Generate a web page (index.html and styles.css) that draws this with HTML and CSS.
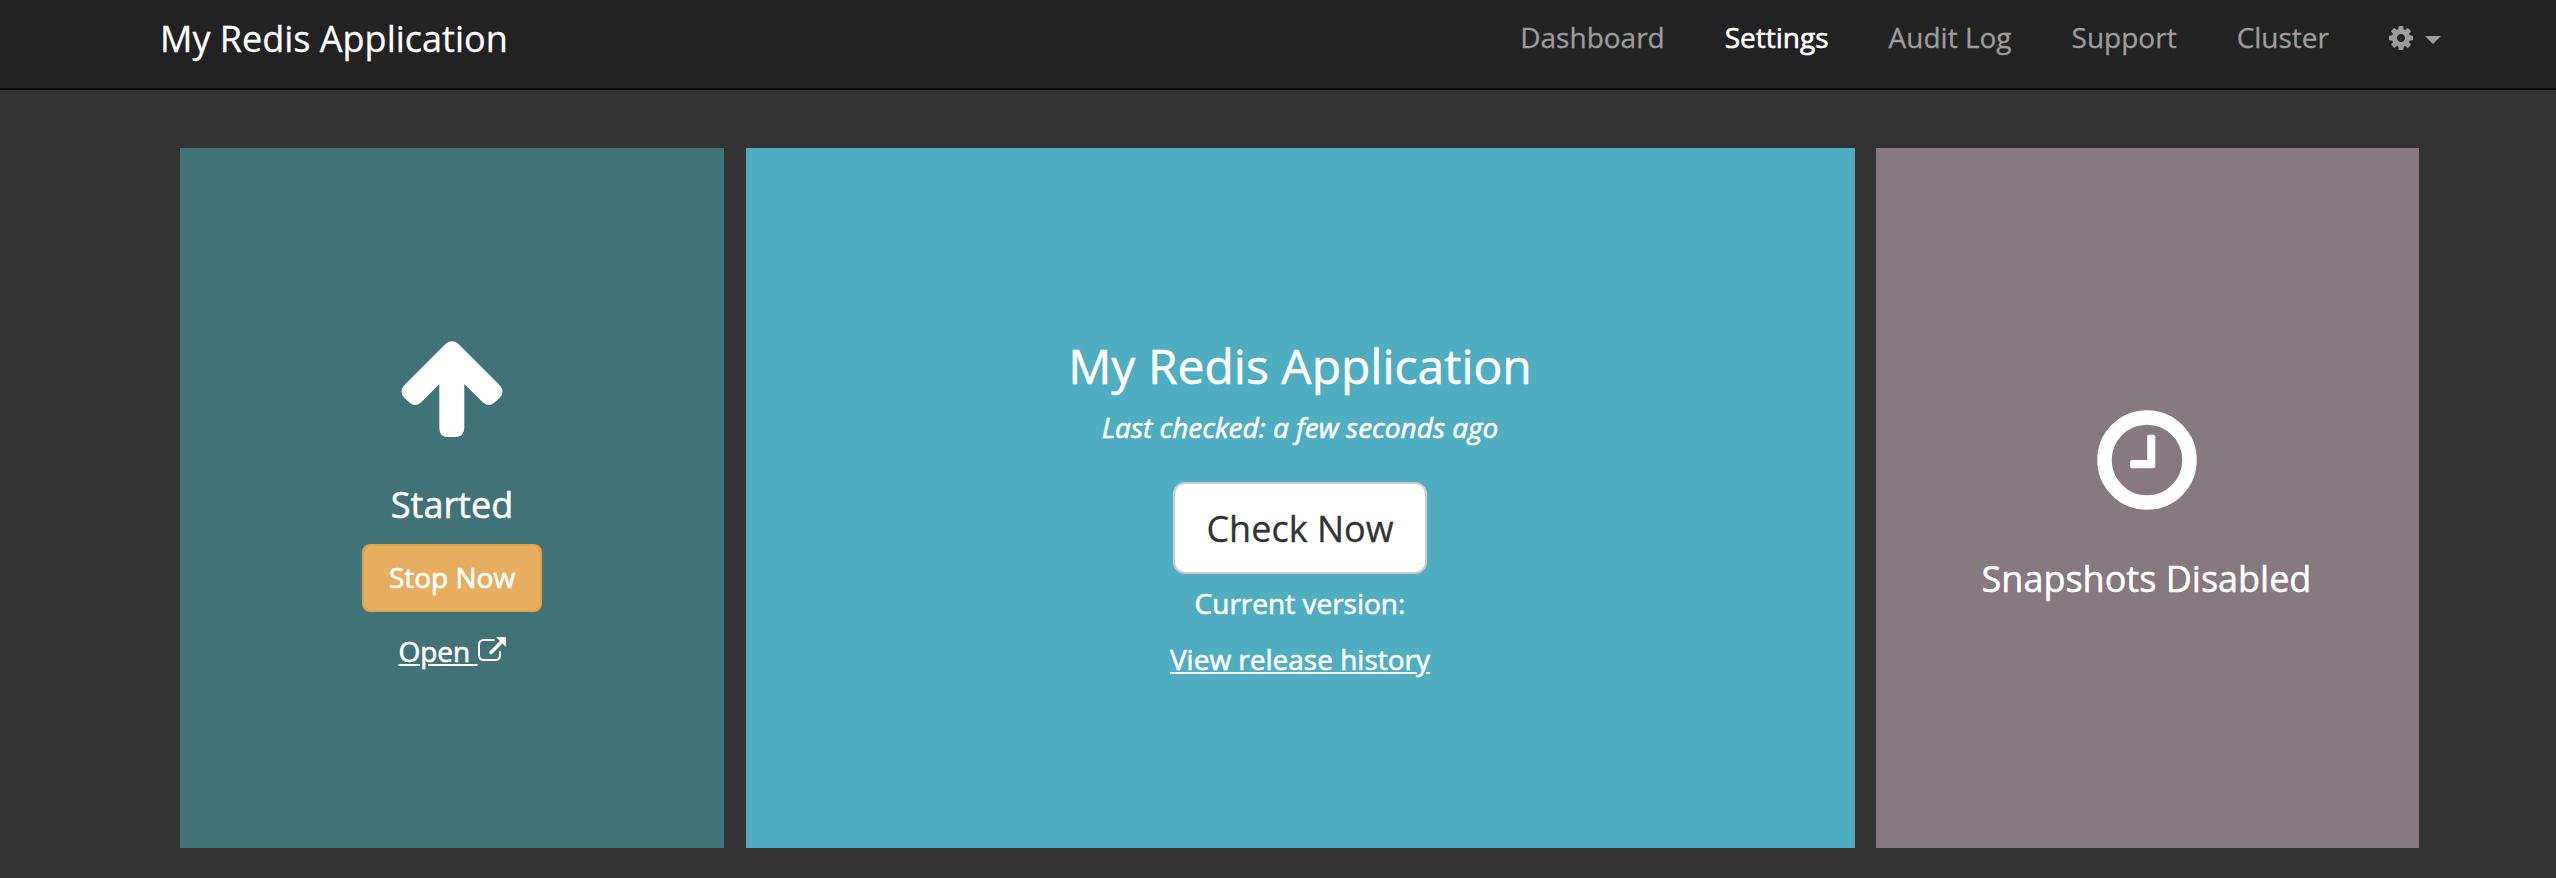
FILE: index.html
```html
<!DOCTYPE html>
<html lang="en">
<head>
<meta charset="utf-8">
<title>My Redis Application</title>
<link rel="stylesheet" href="styles.css">
</head>
<body>
<header class="navbar">
  <a class="brand">My Redis Application</a>
  <nav class="nav">
    <a class="nav-link">Dashboard</a>
    <a class="nav-link active">Settings</a>
    <a class="nav-link">Audit Log</a>
    <a class="nav-link">Support</a>
    <a class="nav-link">Cluster</a>
    <a class="nav-link nav-menu">
      <svg class="cog" viewBox="128 128 1536 1536"><path fill="currentColor" d="M1152 896q0-106-75-181t-181-75-181 75-75 181 75 181 181 75 181-75 75-181zm512-109v222q0 12-8 23t-20 13l-185 28q-19 54-39 91 35 50 107 138 10 12 10 25t-9 23q-27 37-99 108t-94 71q-12 0-26-9l-138-108q-44 23-91 38-16 136-29 186-7 28-36 28h-222q-14 0-24.5-8.5t-11.5-21.5l-28-184q-49-16-90-37l-141 107q-10 9-25 9-14 0-25-11-126-114-165-168-7-10-7-23 0-12 8-23 15-21 51-66.5t54-70.5q-27-50-41-99l-183-27q-13-2-21-12.5t-8-23.5v-222q0-12 8-23t19-13l186-28q14-46 39-92-40-57-107-138-10-12-10-24 0-10 9-23 26-36 98.500-107.500t94.500-71.500q13 0 26 10l138 107q44-23 91-38 16-136 29-186 7-28 36-28h222q14 0 24.500 8.500t11.500 21.500l28 184q49 16 90 37l142-107q9-9 24-9 13 0 25 10 129 119 165 170 7 8 7 22 0 12-8 23-15 21-51 66.500t-54 70.500q26 50 41 98l183 28q13 2 21 12.500t8 23.500z"/></svg>
      <span class="caret"></span>
    </a>
  </nav>
</header>
<main class="panels">
  <section class="panel status">
    <svg class="arrow" viewBox="0 0 102 96"><path fill="#fff" d="M45 2.500Q51-2 57 2.500L99 44.500Q104 50.500 99 56.500L93.500 61.500Q88 66.500 82 61.500L63.300 43V87Q63 96 54 96H47Q38.500 96 38.300 87V43L20 61.500Q14 66.500 8.500 61.500L3 56.500Q-2 50.500 3 44.500Z"/></svg>
    <h3 class="label">Started</h3>
    <button class="btn btn-warning">Stop Now</button>
    <a class="link open"><span class="open-text">Open&nbsp;</span><svg class="external" viewBox="0 0 28 24"><path fill="none" stroke="#fff" stroke-width="2" d="M16.500 3H6Q1 3 1 8V18Q1 23 6 23H17Q22 23 22 18V14"/><path fill="none" stroke="#fff" stroke-width="3.500" stroke-linecap="round" d="M13 15.500L24 4.500"/><path fill="#fff" d="M18 0H28V10Z"/></svg></a>
  </section>
  <section class="panel app">
    <h2 class="title">My Redis Application</h2>
    <em class="checked">Last checked: a few seconds ago</em>
    <button class="btn btn-default">Check Now</button>
    <p class="version">Current version:</p>
    <a class="link history">View release history</a>
  </section>
  <section class="panel snapshots">
    <svg class="clock" viewBox="0 0 100 100"><circle cx="50" cy="50" r="42.500" fill="none" stroke="#fff" stroke-width="14.500"/><path fill="#fff" d="M52 24.800H56.500Q58.300 24.800 58.300 26.600V56.500Q58.300 58.300 56.500 58.300H35Q33.200 58.300 33.200 56.500V51.800Q33.200 50 35 50H50.200V26.600Q50.200 24.800 52 24.800Z"/></svg>
    <h3 class="label">Snapshots Disabled</h3>
  </section>
</main>
</body>
</html>
```
FILE: styles.css
```css
* { box-sizing: border-box; }
body {
  margin: 0;
  height: 878px;
  overflow: hidden;
  background: #333;
  color: #fff;
  font: 28px/40px "Open Sans", sans-serif;
  -webkit-text-stroke: .3px currentColor;
}
.navbar {
  display: flex;
  justify-content: space-between;
  height: 90px;
  padding: 0 115px 0 160px;
  background: #222;
  border-bottom: 2px solid #080808;
}
.brand { font-size: 36px; line-height: 40px; padding-top: 19px; white-space: nowrap; }
.nav { display: flex; gap: 60px; padding-top: 17px; color: #9d9d9d; white-space: nowrap; }
.active { color: #fff; -webkit-text-stroke: .6px #fff; }
.nav-menu { display: flex; align-items: center; gap: 12px; height: 42px; }
.cog { width: 24px; height: 26px; }
.caret { margin-top: 4px; border: 8px solid transparent; border-top-color: currentColor; border-bottom: 0; }
.panels {
  display: grid;
  grid-template-columns: 544px 1109px 543px;
  column-gap: 21.500px;
  padding: 58px 0 0 180px;
}
.panel { height: 700px; display: flex; flex-direction: column; align-items: center; }
.status { background: #417278; }
.app { background: #4fadc2; }
.snapshots { background: #867980; padding-right: 2px; }
.arrow { width: 102px; height: 96px; margin-top: 193px; }
.label { margin: 0; font-size: 36px; line-height: 40px; font-weight: 400; -webkit-text-stroke: .5px #fff; }
.status .label { margin-top: 48px; }
.btn { font-family: inherit; display: block; padding: 0; white-space: nowrap; }
.btn-warning {
  width: 180px; height: 68px; margin-top: 19px; padding-bottom: 2px;
  border: 2px solid #dfa14b; border-radius: 8px;
  background: #e7ae60; color: #fff; font-size: 28px; -webkit-text-stroke: .6px #fff;
}
.link { text-decoration: underline; }
.open { display: flex; margin-top: 19px; text-decoration: none; }
.open-text { text-decoration: underline; }
.external { width: 28px; height: 24px; margin-top: 6px; }
.title { margin: 190px 0 0; font-size: 48px; line-height: 56px; font-weight: 400; -webkit-text-stroke: .5px #fff; }
.checked { margin-top: 13px; }
.btn-default {
  width: 254px; height: 92px; margin-top: 35px;
  border: 2px solid #ccc; border-radius: 12px;
  background: #fff; color: #333; font-size: 36px;
}
.version { margin: 9px 0 0; }
.history { margin-top: 16px; }
.checked, .version, .history, .open-text { -webkit-text-stroke: .6px #fff; }
.clock { width: 100px; height: 100px; margin-top: 262px; }
.snapshots .label { margin-top: 49px; }
```
